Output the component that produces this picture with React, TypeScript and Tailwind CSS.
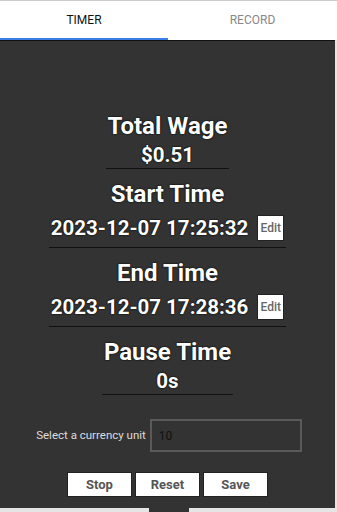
import React from 'react';

const shadow = '[text-shadow:0_0_2px_#000,0_0_1px_#000]';

function Field({ title, value, lineClass, edit }: { title: string; value: string; lineClass: string; edit?: boolean }) {
  return (
    <div className="flex flex-col items-center">
      <div className={`text-[24px] font-bold leading-[30px] text-white ${shadow}`}>{title}</div>
      <div className={`flex items-center gap-[9px] ${edit ? 'h-[38px]' : 'h-[27px]'}`}>
        <span className={`text-[20.5px] font-bold leading-[28px] text-white ${shadow}`}>{value}</span>
        {edit && (
          <button
            type="button"
            className="flex h-[26px] w-[27px] items-center justify-center border border-[#222] bg-white text-[12px] font-medium text-[#666]"
          >
            Edit
          </button>
        )}
      </div>
      <div className={`h-px bg-[#111] ${lineClass}`} />
    </div>
  );
}

export default function App() {
  return (
    <div className="flex h-[512px] w-[337px] flex-col overflow-hidden bg-[#e5e5e5] font-['Roboto',sans-serif]">
      {/* Tabs */}
      <div className="flex h-[40px] shrink-0 border-t border-[#ccc] bg-white">
        <div className="flex w-[168px] flex-col">
          <div className="flex flex-1 items-center justify-center text-[12px] text-[#111]">TIMER</div>
          <div className="h-[2px] bg-[#3b7ee8]" />
        </div>
        <div className="flex flex-1 items-center justify-center pb-[2px] text-[12px] text-[#888]">RECORD</div>
      </div>

      {/* Content */}
      <div className="mr-[2px] flex h-[468px] shrink-0 flex-col border-t border-[#111] bg-[#333] pt-[70px]">
        <div className="flex flex-col gap-[10px]">
          <Field title="Total Wage" value="$0.51" lineClass="w-[123px]" />
          <Field title="Start Time" value="2023-12-07 17:25:32" lineClass="w-[237px]" edit />
          <Field title="End Time" value="2023-12-07 17:28:36" lineClass="w-[237px]" edit />
          <Field title="Pause Time" value="0s" lineClass="w-[131px]" />
        </div>

        <div className="mt-[24px] flex items-center justify-center gap-[4px] pl-[3px]">
          <span className="text-[11.5px] text-[#ddd]">Select a currency unit</span>
          <div className="flex h-[33px] w-[152px] items-center border-2 border-[#5a5a5a] px-[7px] text-[12px] text-[#111]">
            10
          </div>
        </div>

        <div className="mt-[20px] flex justify-center gap-[3px]">
          {['Stop', 'Reset', 'Save'].map((b) => (
            <button
              key={b}
              type="button"
              className="h-[25px] w-[65px] border border-[#222] bg-white text-[13px] font-bold text-[#555]"
            >
              {b}
            </button>
          ))}
        </div>
      </div>
      <div className="flex flex-1 justify-center">
        <div className="h-full w-[40px] bg-[#333]" />
      </div>
    </div>
  );
}
